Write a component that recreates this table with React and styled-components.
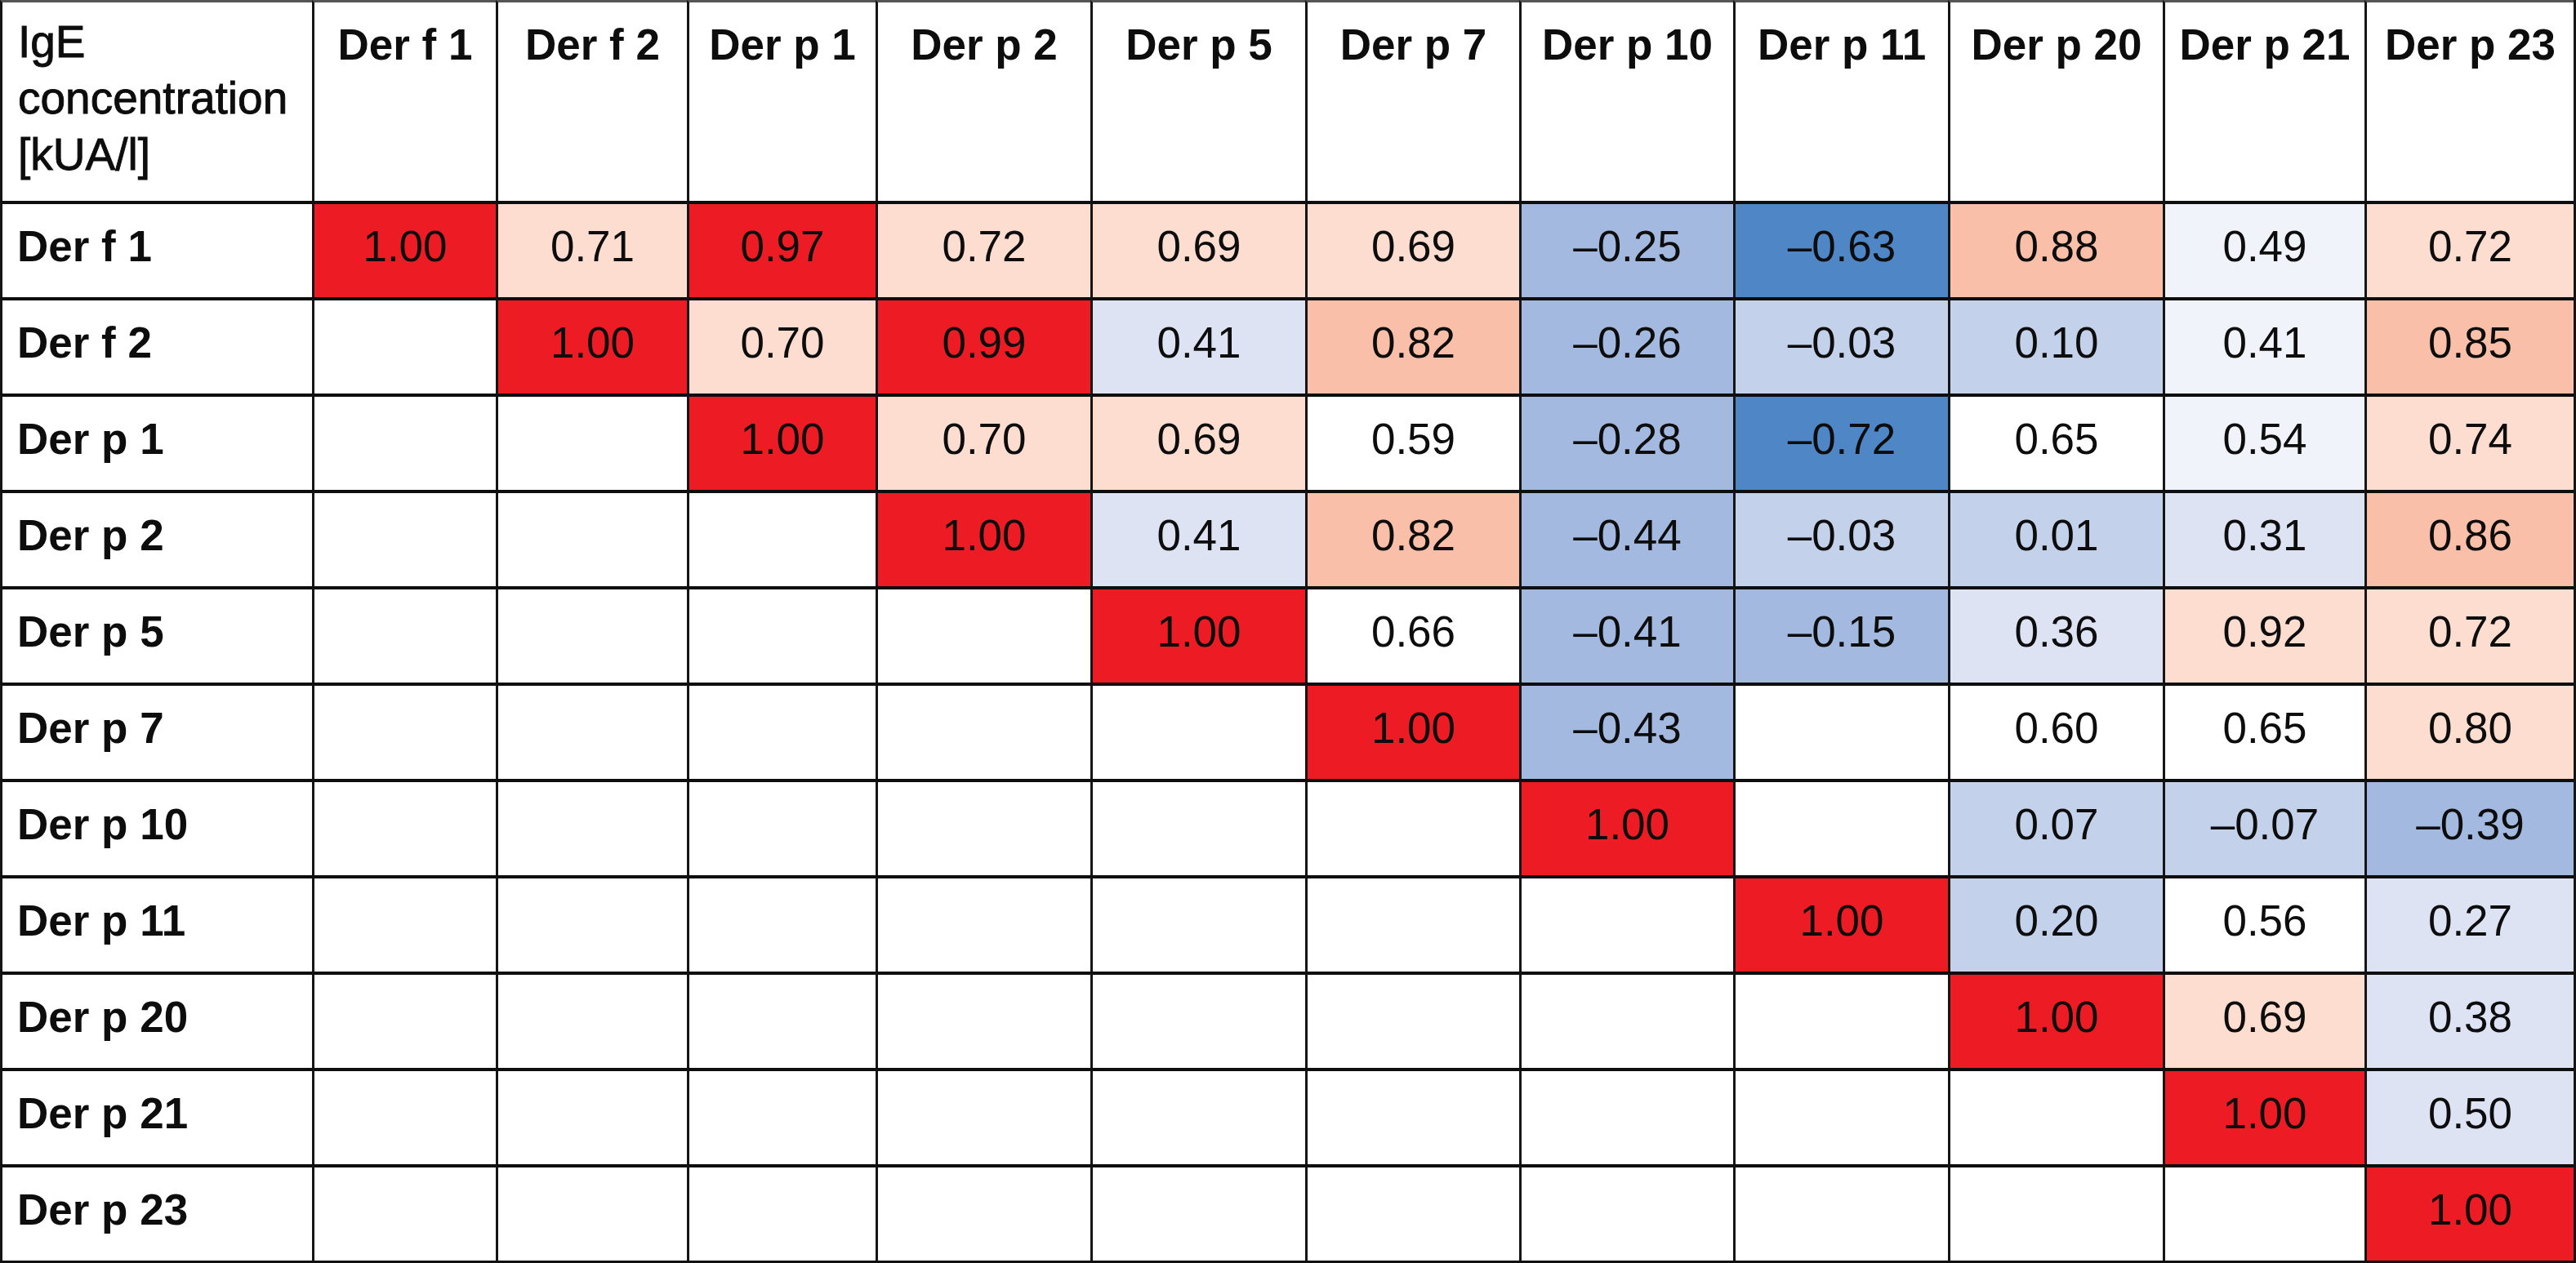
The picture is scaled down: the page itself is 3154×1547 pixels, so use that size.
import React from 'react';
import styled, { createGlobalStyle } from 'styled-components';

const GlobalStyle = createGlobalStyle`
  html, body {
    margin: 0;
    padding: 0;
    background: #ffffff;
  }
`;

const colors = {
  R: '#ED1C24',
  P: '#FCDDCF',
  M: '#F9BFA8',
  V: '#F1F3FA',
  L: '#DEE3F4',
  B: '#C3D1EB',
  D: '#A3B9DF',
  S: '#4E86C6',
  W: '#FFFFFF',
};

const columns = ['Der f 1', 'Der f 2', 'Der p 1', 'Der p 2', 'Der p 5', 'Der p 7', 'Der p 10', 'Der p 11', 'Der p 20', 'Der p 21', 'Der p 23'];

// value:colour, "-" = empty cell
const matrix = [
  '1.00:R 0.71:P 0.97:R 0.72:P 0.69:P 0.69:P –0.25:D –0.63:S 0.88:M 0.49:V 0.72:P',
  '- 1.00:R 0.70:P 0.99:R 0.41:L 0.82:M –0.26:D –0.03:B 0.10:B 0.41:V 0.85:M',
  '- - 1.00:R 0.70:P 0.69:P 0.59:W –0.28:D –0.72:S 0.65:W 0.54:V 0.74:P',
  '- - - 1.00:R 0.41:L 0.82:M –0.44:D –0.03:B 0.01:B 0.31:L 0.86:M',
  '- - - - 1.00:R 0.66:W –0.41:D –0.15:D 0.36:L 0.92:P 0.72:P',
  '- - - - - 1.00:R –0.43:D - 0.60:W 0.65:W 0.80:P',
  '- - - - - - 1.00:R - 0.07:B –0.07:B –0.39:D',
  '- - - - - - - 1.00:R 0.20:B 0.56:W 0.27:L',
  '- - - - - - - - 1.00:R 0.69:P 0.38:L',
  '- - - - - - - - - 1.00:R 0.50:L',
  '- - - - - - - - - - 1.00:R',
].map(line =>
  line.split(' ').map(item => {
    if (item === '-') return null;
    const [value, key] = item.split(':');
    return { value, color: colors[key] };
  })
);

const Table = styled.div`
  display: grid;
  grid-template-columns: 382px 225px 234px 231px 263px 263px 262px 262px 263px 263px 247px 256px;
  grid-template-rows: 246px repeat(11, 118px);
  width: 3154px;
  box-sizing: border-box;
  border-right: 3px solid #151515;
  border-bottom: 3px solid #111111;
  color: #0d0d0d;
  font-family: 'Liberation Sans', Arial, sans-serif;
  font-size: 53px;
`;

const Cell = styled.div`
  box-sizing: border-box;
  border-left: 3px solid #151515;
  border-top: 4px solid #0e0e0e;
  background: ${p => p.$bg || '#ffffff'};
  line-height: 53px;
  padding-top: 25px;
  white-space: nowrap;
`;

const HeadCell = styled(Cell)`
  border-top: 3px solid #555555;
  font-weight: 700;
  text-align: center;
`;

const CornerCell = styled(Cell)`
  border-top: 3px solid #555555;
  font-size: 55px;
  font-weight: 400;
  line-height: 69px;
  padding: 14px 0 0 19px;
  white-space: normal;
  -webkit-text-stroke: 0.9px #0d0d0d;
`;

const LabelCell = styled(Cell)`
  font-weight: 700;
  padding-left: 18px;
`;

const ValueCell = styled(Cell)`
  font-family: 'Liberation Sans Narrow', 'Arial Narrow', 'Liberation Sans', sans-serif;
  text-align: center;
`;

export default function App() {
  return (
    <>
      <GlobalStyle />
      <Table>
        <CornerCell>
          IgE
          <br />
          concentration
          <br />
          [kUA/l]
        </CornerCell>
        {columns.map(name => (
          <HeadCell key={name}>{name}</HeadCell>
        ))}
        {matrix.map((row, i) => (
          <React.Fragment key={columns[i]}>
            <LabelCell>{columns[i]}</LabelCell>
            {row.map((cell, j) => (
              <ValueCell key={j} $bg={cell ? cell.color : undefined}>
                {cell ? cell.value : ''}
              </ValueCell>
            ))}
          </React.Fragment>
        ))}
      </Table>
    </>
  );
}
